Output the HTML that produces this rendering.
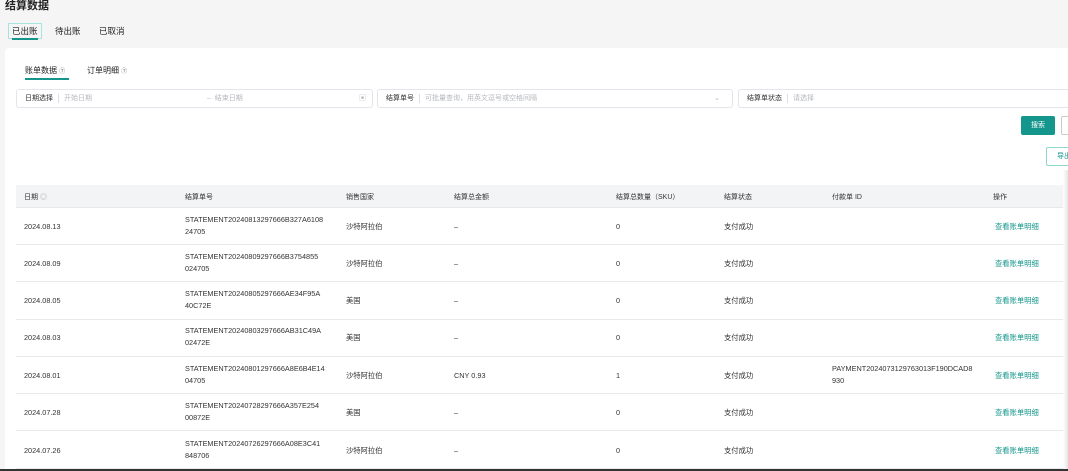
<!DOCTYPE html>
<html><head><meta charset="utf-8"><style>
*{margin:0;padding:0;box-sizing:border-box}
html{overflow:hidden;width:1068px;height:471px}
body{width:1068px;height:471px;overflow:hidden;background:#f5f5f6;font-family:"Liberation Sans","Noto Sans CJK SC",sans-serif;color:#222;position:relative}
.a{position:absolute;white-space:nowrap}
.card{position:absolute;left:5px;top:48px;width:1063px;height:421px;background:#fff;border-radius:4px 0 0 0}
.box{position:absolute;top:89px;height:19px;border:1px solid #e3e5ea;border-radius:3px;font-size:7px;line-height:17px;padding-left:8px;color:#333}
.ph{color:#b5b8bd}
.sep{display:inline-block;width:1px;height:9px;background:#dde;vertical-align:middle;margin:0 5px}
.th{position:absolute;left:16px;top:185px;width:1052px;height:23px;background:#f3f4f5;border-bottom:1px solid #e8e8e8}
.t{font-size:7px;color:#333}
.row{position:absolute;left:16px;width:1052px;height:37px;border-bottom:1px solid #e9e9e9}
.row div{position:absolute;font-size:7.3px;color:#333;line-height:12px}
.lk{color:#14968d!important}
</style></head><body>
<div class="a" style="left:5px;top:-3px;font-size:11px;font-weight:bold;color:#222">结算数据</div>
<div class="a" style="left:8px;top:23px;width:34px;height:16px;border:1px solid #a8e3dd;"></div>
<div class="a" style="left:12px;top:25px;font-size:8.5px">已出账</div>
<div class="a" style="left:12px;top:38px;width:26px;height:1.5px;background:#14968d"></div>
<div class="a" style="left:55px;top:25px;font-size:8.5px">待出账</div>
<div class="a" style="left:99px;top:25px;font-size:8.5px">已取消</div>
<div class="card"></div>
<div class="a" style="left:25px;top:65px;font-size:8px">账单数据 <span style="font-size:6px;color:#666">⑦</span></div>
<div class="a" style="left:25px;top:78px;width:44px;height:1.5px;background:#14968d"></div>
<div class="a" style="left:87px;top:65px;font-size:8px">订单明细 <span style="font-size:6px;color:#666">⑦</span></div>
<div class="box" style="left:16px;width:357px">日期选择<span class="sep"></span><span class="ph">开始日期</span><span class="ph" style="position:absolute;left:190px">–&nbsp; 结束日期</span><span class="ph" style="position:absolute;left:342px">▣</span></div>
<div class="box" style="left:377px;width:356px">结算单号<span class="sep"></span><span class="ph">可批量查询，用英文逗号或空格间隔</span><span class="ph" style="position:absolute;left:336px">⌄</span></div>
<div class="box" style="left:738px;width:340px">结算单状态<span class="sep"></span><span class="ph">请选择</span></div>
<div class="a" style="left:1021px;top:116px;width:34px;height:19px;background:#14968d;border-radius:2px;color:#fff;font-size:7px;line-height:19px;text-align:center">搜索</div>
<div class="a" style="left:1061px;top:116px;width:20px;height:19px;border:1px solid #ccc;border-radius:2px"></div>
<div class="a" style="left:1046px;top:147px;width:30px;height:19px;border:1px solid #8fd6cf;border-radius:2px;color:#14968d;font-size:7px;line-height:17px;padding-left:10px">导出</div>
<div class="th">
<div class="a t" style="left:8px;top:7px">日期 <span style="color:#aaa">◎</span></div>
<div class="a t" style="left:169px;top:7px">结算单号</div>
<div class="a t" style="left:330px;top:7px">销售国家</div>
<div class="a t" style="left:438px;top:7px">结算总金额</div>
<div class="a t" style="left:600px;top:7px">结算总数量（SKU）</div>
<div class="a t" style="left:708px;top:7px">结算状态</div>
<div class="a t" style="left:816px;top:7px">付款单 ID</div>
<div class="a t" style="left:977px;top:7px">操作</div>
</div>
<div class="row" style="top:208px"><div style="left:8px;top:13px">2024.08.13</div><div style="left:169px;top:6px">STATEMENT20240813297666B327A6108<br>24705</div><div style="left:330px;top:13px">沙特阿拉伯</div><div style="left:438px;top:13px">–</div><div style="left:600px;top:13px">0</div><div style="left:708px;top:13px">支付成功</div><div class="lk" style="left:979px;top:13px">查看账单明细</div></div>
<div class="row" style="top:245px"><div style="left:8px;top:13px">2024.08.09</div><div style="left:169px;top:6px">STATEMENT20240809297666B3754855<br>024705</div><div style="left:330px;top:13px">沙特阿拉伯</div><div style="left:438px;top:13px">–</div><div style="left:600px;top:13px">0</div><div style="left:708px;top:13px">支付成功</div><div class="lk" style="left:979px;top:13px">查看账单明细</div></div>
<div class="row" style="top:283px"><div style="left:8px;top:12px">2024.08.05</div><div style="left:169px;top:5px">STATEMENT20240805297666AE34F95A<br>40C72E</div><div style="left:330px;top:12px">美国</div><div style="left:438px;top:12px">–</div><div style="left:600px;top:12px">0</div><div style="left:708px;top:12px">支付成功</div><div class="lk" style="left:979px;top:12px">查看账单明细</div></div>
<div class="row" style="top:320px"><div style="left:8px;top:12px">2024.08.03</div><div style="left:169px;top:5px">STATEMENT20240803297666AB31C49A<br>02472E</div><div style="left:330px;top:12px">美国</div><div style="left:438px;top:12px">–</div><div style="left:600px;top:12px">0</div><div style="left:708px;top:12px">支付成功</div><div class="lk" style="left:979px;top:12px">查看账单明细</div></div>
<div class="row" style="top:357px"><div style="left:8px;top:13px">2024.08.01</div><div style="left:169px;top:6px">STATEMENT20240801297666A8E6B4E14<br>04705</div><div style="left:330px;top:13px">沙特阿拉伯</div><div style="left:438px;top:13px">CNY 0.93</div><div style="left:600px;top:13px">1</div><div style="left:708px;top:13px">支付成功</div><div style="left:816px;top:6px">PAYMENT2024073129763013F190DCAD8<br>930</div><div class="lk" style="left:979px;top:13px">查看账单明细</div></div>
<div class="row" style="top:394px"><div style="left:8px;top:13px">2024.07.28</div><div style="left:169px;top:6px">STATEMENT20240728297666A357E254<br>00872E</div><div style="left:330px;top:13px">美国</div><div style="left:438px;top:13px">–</div><div style="left:600px;top:13px">0</div><div style="left:708px;top:13px">支付成功</div><div class="lk" style="left:979px;top:13px">查看账单明细</div></div>
<div class="row" style="top:432px"><div style="left:8px;top:13px">2024.07.26</div><div style="left:169px;top:6px">STATEMENT20240726297666A08E3C41<br>848706</div><div style="left:330px;top:13px">沙特阿拉伯</div><div style="left:438px;top:13px">–</div><div style="left:600px;top:13px">0</div><div style="left:708px;top:13px">支付成功</div><div class="lk" style="left:979px;top:13px">查看账单明细</div></div>
<div class="a" style="left:1063px;top:170px;width:5px;height:300px;background:linear-gradient(90deg,#fff,#e6e6e6)"></div>
<div class="a" style="left:0;top:469px;width:1068px;height:2px;background:#333"></div>
</body></html>
